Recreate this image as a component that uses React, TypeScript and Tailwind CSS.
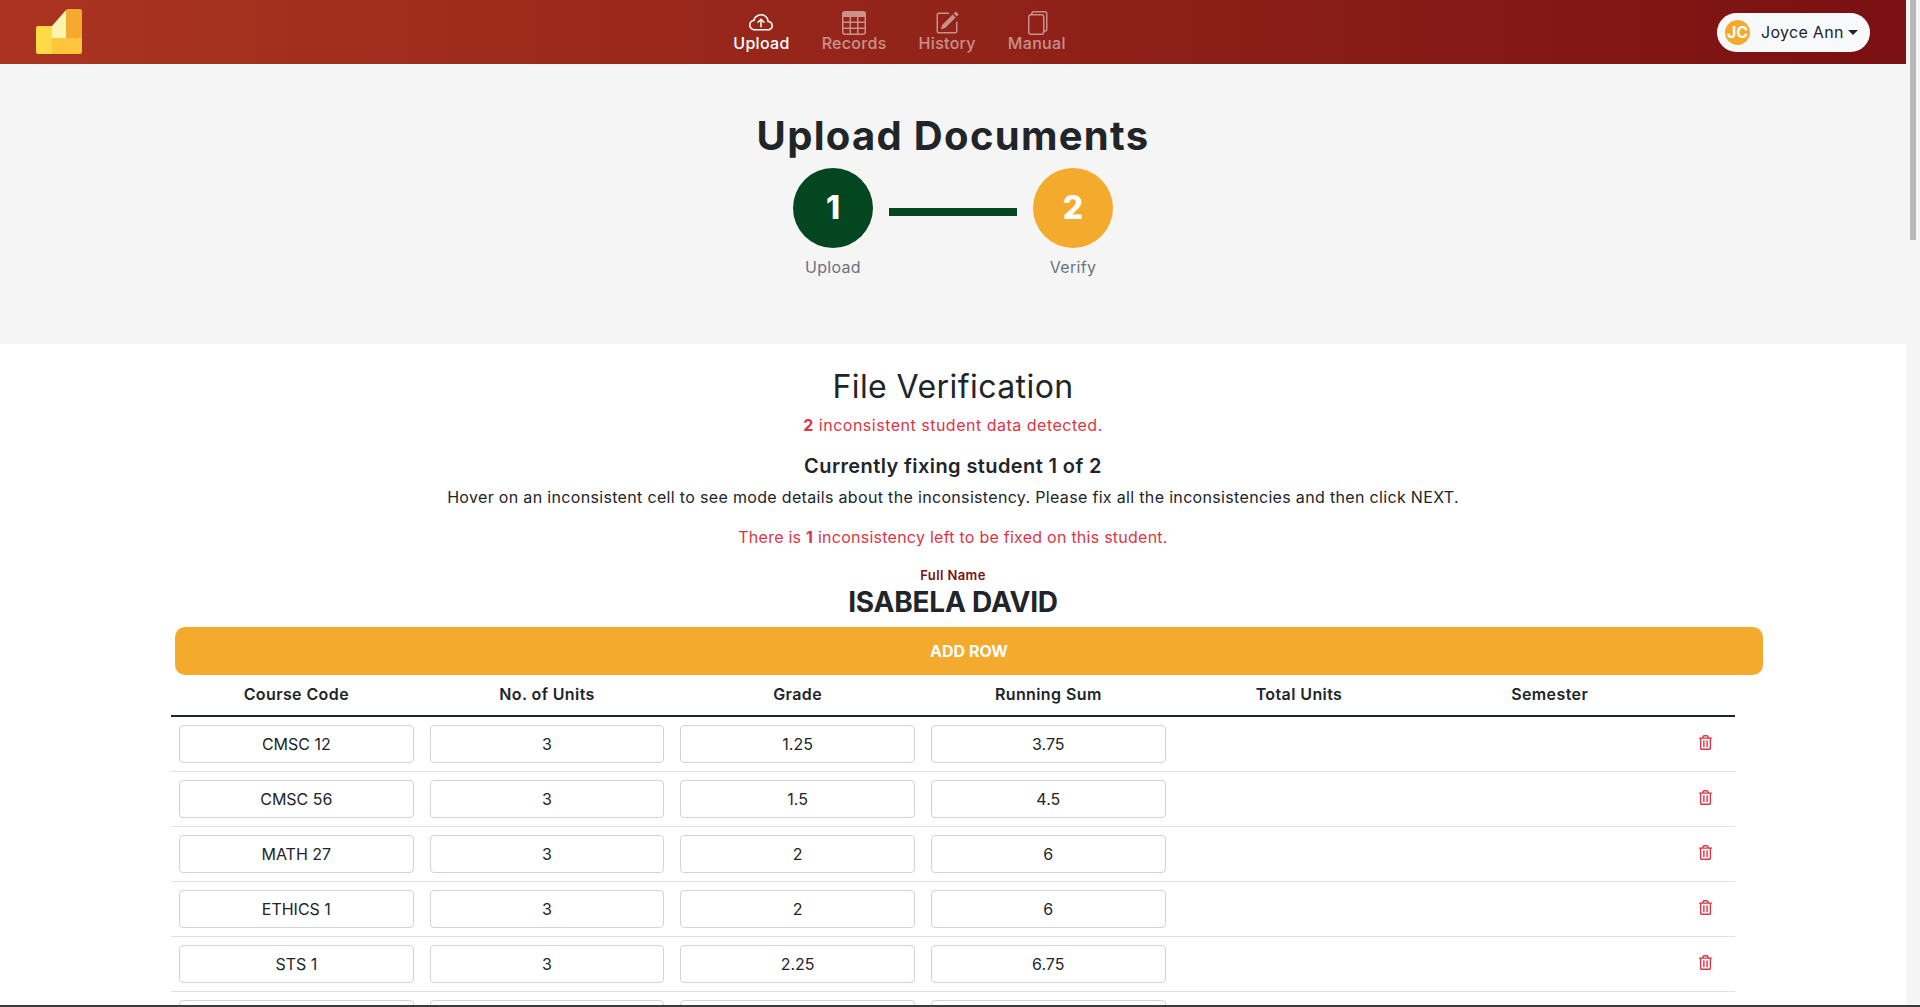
import { BsCloudArrowUp, BsFiles, BsPencilSquare, BsTable } from 'react-icons/bs'
import { FaRegTrashAlt } from 'react-icons/fa'

const font = { fontFamily: 'Inter, "Liberation Sans", sans-serif' }

const navItems = [
  { label: 'Upload', icon: BsCloudArrowUp, active: true },
  { label: 'Records', icon: BsTable, active: false },
  { label: 'History', icon: BsPencilSquare, active: false },
  { label: 'Manual', icon: BsFiles, active: false },
]

const columns = ['Course Code', 'No. of Units', 'Grade', 'Running Sum', 'Total Units', 'Semester']

const rows = [
  ['CMSC 12', '3', '1.25', '3.75'],
  ['CMSC 56', '3', '1.5', '4.5'],
  ['MATH 27', '3', '2', '6'],
  ['ETHICS 1', '3', '2', '6'],
  ['STS 1', '3', '2.25', '6.75'],
  ['', '', '', ''],
]

function Logo() {
  return (
    <svg width="46" height="46" viewBox="0 0 46 46" className="shrink-0">
      <path d="M16 17 L30 1 V29 H16 Z" fill="#fff3b0" />
      <path d="M30 2 a2 2 0 0 1 2 -2 H44 a2 2 0 0 1 2 2 V29 H30 Z" fill="#f4aa2c" />
      <path d="M16 29 H46 V43 a2 2 0 0 1 -2 2 H16 Z" fill="#ffc53d" />
      <path d="M2 17 H16 V45 H2 a2 2 0 0 1 -2 -2 V19 a2 2 0 0 1 2 -2 Z" fill="#ffda44" />
    </svg>
  )
}

function Navbar() {
  return (
    <nav className="flex h-16 shrink-0 items-center justify-between bg-gradient-to-r from-[#aa3420] to-[#7a1012] pl-9 pr-9">
      <Logo />
      <div className="flex items-center gap-8">
        {navItems.map((item) => (
          <div
            key={item.label}
            className={`flex flex-col items-center ${item.active ? 'text-white' : 'text-white/50'}`}
          >
            <item.icon className="h-6 w-6" />
            <span className="-mt-px mb-px text-base leading-[18px] font-medium tracking-[0.3px]">
              {item.label}
            </span>
          </div>
        ))}
      </div>
      <div className="flex h-[39px] w-[153px] items-center rounded-full bg-[#f8f9fa] pl-2 text-[#212529]">
        <span className="flex h-[25px] w-[25px] items-center justify-center rounded-full bg-[#f4aa2c] text-base font-bold text-white">
          JC
        </span>
        <span className="ml-[11px] text-base tracking-[0.3px]">Joyce Ann</span>
        <span className="ml-1 h-0 w-0 border-x-[5px] border-t-[5px] border-x-transparent border-t-[#212529]" />
      </div>
    </nav>
  )
}

function Stepper() {
  return (
    <section className="flex h-[280px] shrink-0 flex-col items-center bg-[#f5f5f5] pt-[42px]">
      <h1 className="text-[40px] leading-[60px] font-bold tracking-[1.3px] text-[#212529]">Upload Documents</h1>
      <div className="mt-[2px] flex items-start gap-4">
        <div className="flex w-20 flex-col items-center">
          <div className="flex h-20 w-20 items-center justify-center rounded-full bg-[#034620] text-[32px] font-extrabold text-white">
            1
          </div>
          <span className="mt-[7px] text-base tracking-[0.3px] text-[#6b7280]">Upload</span>
        </div>
        <div className="mt-10 h-2 w-32 bg-[#034620]" />
        <div className="flex w-20 flex-col items-center">
          <div className="flex h-20 w-20 items-center justify-center rounded-full bg-[#f4aa2c] text-[32px] font-extrabold text-white">
            2
          </div>
          <span className="mt-[7px] text-base tracking-[0.3px] text-[#6b7280]">Verify</span>
        </div>
      </div>
    </section>
  )
}

function CellInput({ value }: { value: string }) {
  return (
    <div className="flex h-[38px] items-center justify-center rounded border border-[#ced4da] bg-white text-base text-[#212529]">
      {value}
    </div>
  )
}

function Verification() {
  return (
    <section className="flex min-h-0 flex-1 flex-col items-center overflow-hidden bg-white pt-[17px] text-[#212529]">
      <h2 className="text-[32px] leading-[52px] tracking-[0.43px]">File Verification</h2>
      <p className="text-base leading-6 tracking-[0.5px] text-[#dc3545]">
        <b>2</b> inconsistent student data detected.
      </p>
      <h3 className="mt-[14px] text-xl leading-[30px] font-semibold tracking-[0.4px]">
        Currently fixing student 1 of 2
      </h3>
      <p className="mt-[4px] text-base leading-6 tracking-[0.33px]">
        Hover on an inconsistent cell to see mode details about the inconsistency. Please fix all the
        inconsistencies and then click NEXT.
      </p>
      <p className="mt-4 text-base leading-6 tracking-[0.25px] text-[#dc3545]">
        There is <b>1</b> inconsistency left to be fixed on this student.
      </p>
      <span className="mt-[17px] text-[13px] leading-[18px] font-semibold tracking-[0.4px] text-[#7a1012]">
        Full Name
      </span>
      <span className="text-[28px] leading-[36px] font-bold tracking-[-0.2px]">ISABELA DAVID</span>
      <div className="mt-[7px] ml-[32px] flex h-12 w-[1588px] shrink-0 items-center justify-center rounded-[10px] bg-[#f4aa2c] text-base font-bold text-white">
        ADD ROW
      </div>
      <table className="mt-[2px] w-[1564px] shrink-0 table-fixed border-collapse">
        <colgroup>
          {columns.map((c) => (
            <col key={c} />
          ))}
          <col className="w-[60px]" />
        </colgroup>
        <thead>
          <tr className="h-[39px] border-b-2 border-[#212529]">
            {columns.map((c) => (
              <th key={c} className="pb-[4px] text-base font-semibold tracking-[0.4px]">
                {c}
              </th>
            ))}
            <th />
          </tr>
        </thead>
        <tbody>
          {rows.map((row, i) => (
            <tr key={i} className="h-[55px] border-b border-[#dee2e6]">
              {row.map((value, j) => (
                <td key={j} className="px-2">
                  <CellInput value={value} />
                </td>
              ))}
              <td />
              <td />
              <td>
                <FaRegTrashAlt className="mx-auto mb-[2px] block h-[15px] w-[13px] text-[#dc3545]" />
              </td>
            </tr>
          ))}
        </tbody>
      </table>
    </section>
  )
}

export default function App() {
  return (
    <div className="flex h-screen flex-col overflow-hidden" style={font}>
      <div className="flex min-h-0 flex-1">
        <main className="flex min-w-0 flex-1 flex-col">
          <Navbar />
          <Stepper />
          <Verification />
        </main>
        <aside className="flex w-[14px] shrink-0 justify-center bg-[#f5f5f5]">
          <div className="h-[240px] w-[6px] bg-[#b9b9b9]" />
        </aside>
      </div>
      <div className="h-[2px] shrink-0 bg-[#3c3c3c]" />
    </div>
  )
}
